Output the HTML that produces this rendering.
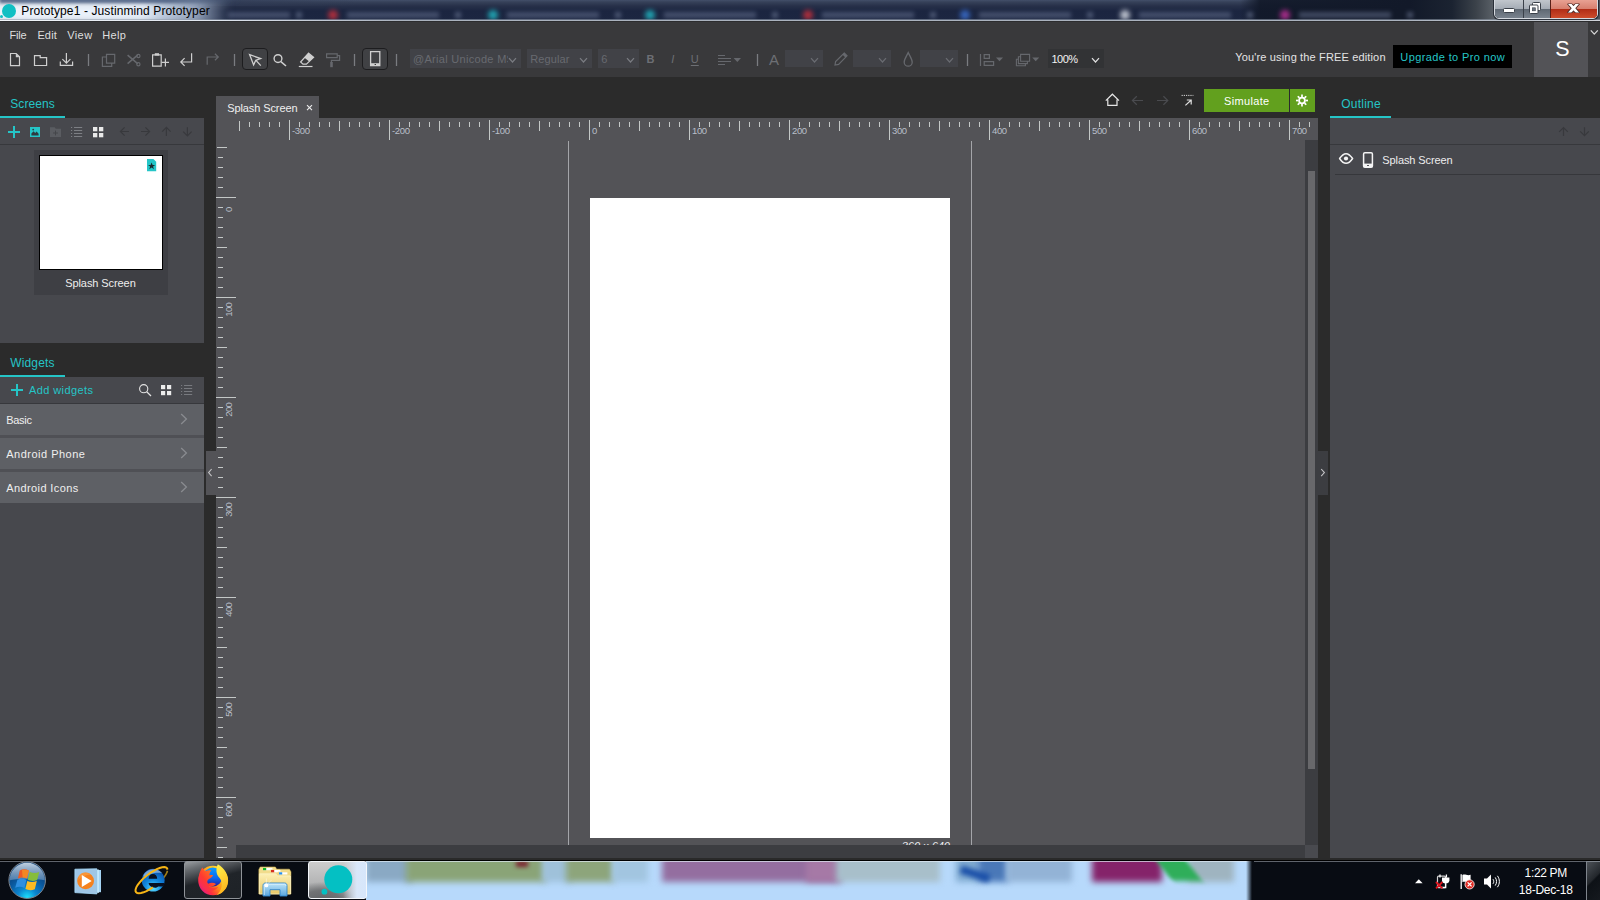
<!DOCTYPE html>
<html lang="en"><head><meta charset="utf-8"><title>Prototype1 - Justinmind Prototyper</title>
<style>
*{box-sizing:border-box;margin:0;padding:0}
html,body{width:1600px;height:900px;overflow:hidden;background:#2b2b2b;font-family:"Liberation Sans",sans-serif;font-size:11px;color:#e6e6e6}
.a{position:absolute}
svg{position:absolute;overflow:visible}
.t{position:absolute;white-space:nowrap;line-height:1}
#titlebar{left:0;top:0;width:1600px;height:21px;background:#141d30;overflow:hidden}
#appbar{left:0;top:21px;width:1600px;height:56px;background:#39393b}
#dark{left:0;top:77px;width:1600px;height:783px;background:#2b2b2b}
.panel{background:#47484d}
.combo{position:absolute;background:#414247}
.cat{position:absolute;left:0;width:204px;height:31px;background:#5e6065}
.tb{position:absolute;border:1px solid #1d1d1f;border-radius:4px;background:#404144}
#taskbar{left:0;top:860px;width:1600px;height:40px;background:#080c13;overflow:hidden}
</style></head><body>
<div id="titlebar" class="a">
<div class="a" style="left:0;top:0;width:1600px;height:21px;background:linear-gradient(#434f6a 0,#364159 2px,#273049 6px,#1b2540 11px,#1c2641 21px)"></div>
<div class="a" style="left:200px;top:0;width:160px;height:6px;background:linear-gradient(90deg,#2f3a54,rgba(47,58,84,0));opacity:.8"></div>
<div class="a" style="left:1220px;top:0;width:380px;height:21px;background:linear-gradient(90deg,rgba(17,24,40,0) 20px,rgba(17,24,40,.9) 40px,#121929 190px,#1b2331 232px,#3b424a 256px,#5b6168 274px,#4d535b 380px)"></div>
<div class="a" style="left:328px;top:10px;width:10px;height:10px;border-radius:50%;background:#c8303c;filter:blur(2.5px);opacity:.85"></div>
<div class="a" style="left:347px;top:12px;width:92px;height:6px;background:#6c7896;filter:blur(2px);opacity:.5"></div>
<div class="a" style="left:455px;top:12px;width:6px;height:6px;background:#7a86a4;filter:blur(2px);opacity:.5"></div>
<div class="a" style="left:488px;top:10px;width:10px;height:10px;border-radius:50%;background:#22b8c4;filter:blur(2.5px);opacity:.85"></div>
<div class="a" style="left:507px;top:12px;width:92px;height:6px;background:#6c7896;filter:blur(2px);opacity:.5"></div>
<div class="a" style="left:615px;top:12px;width:6px;height:6px;background:#7a86a4;filter:blur(2px);opacity:.5"></div>
<div class="a" style="left:645px;top:10px;width:10px;height:10px;border-radius:50%;background:#22b8c4;filter:blur(2.5px);opacity:.85"></div>
<div class="a" style="left:664px;top:12px;width:92px;height:6px;background:#6c7896;filter:blur(2px);opacity:.5"></div>
<div class="a" style="left:772px;top:12px;width:6px;height:6px;background:#7a86a4;filter:blur(2px);opacity:.5"></div>
<div class="a" style="left:803px;top:10px;width:10px;height:10px;border-radius:50%;background:#c8303c;filter:blur(2.5px);opacity:.85"></div>
<div class="a" style="left:822px;top:12px;width:92px;height:6px;background:#6c7896;filter:blur(2px);opacity:.5"></div>
<div class="a" style="left:930px;top:12px;width:6px;height:6px;background:#7a86a4;filter:blur(2px);opacity:.5"></div>
<div class="a" style="left:960px;top:10px;width:10px;height:10px;border-radius:50%;background:#3b6fd0;filter:blur(2.5px);opacity:.85"></div>
<div class="a" style="left:979px;top:12px;width:92px;height:6px;background:#6c7896;filter:blur(2px);opacity:.5"></div>
<div class="a" style="left:1087px;top:12px;width:6px;height:6px;background:#7a86a4;filter:blur(2px);opacity:.5"></div>
<div class="a" style="left:1120px;top:10px;width:10px;height:10px;border-radius:50%;background:#d8dde6;filter:blur(2.5px);opacity:.85"></div>
<div class="a" style="left:1139px;top:12px;width:92px;height:6px;background:#6c7896;filter:blur(2px);opacity:.5"></div>
<div class="a" style="left:1247px;top:12px;width:6px;height:6px;background:#7a86a4;filter:blur(2px);opacity:.5"></div>
<div class="a" style="left:1280px;top:10px;width:10px;height:10px;border-radius:50%;background:#c0309a;filter:blur(2.5px);opacity:.85"></div>
<div class="a" style="left:1299px;top:12px;width:92px;height:6px;background:#6c7896;filter:blur(2px);opacity:.5"></div>
<div class="a" style="left:1407px;top:12px;width:6px;height:6px;background:#7a86a4;filter:blur(2px);opacity:.5"></div>
<div class="a" style="left:228px;top:12px;width:62px;height:6px;background:#6c7896;filter:blur(2px);opacity:.5"></div>
<div class="a" style="left:296px;top:12px;width:6px;height:6px;background:#7a86a4;filter:blur(2px);opacity:.5"></div>
<div class="a" style="left:-30px;top:-1px;width:270px;height:26px;filter:blur(4px);background:linear-gradient(90deg,#eef4fb 0,#e6eef8 64%,rgba(205,218,236,.92) 71%,rgba(175,192,216,.8) 84%,rgba(150,170,200,0) 96%)"></div>
<div class="a" style="left:0;top:-2px;width:240px;height:5px;filter:blur(1.5px);background:linear-gradient(90deg,rgba(75,95,130,.85) 0,rgba(75,95,130,.85) 70%,rgba(75,95,130,0))"></div>
<div class="a" style="left:0;top:19px;width:1600px;height:1px;background:rgba(150,160,175,.55)"></div>
<div class="a" style="left:0;top:20px;width:1600px;height:1px;background:linear-gradient(90deg,#f2f6fa 0,#dfe5ee 220px,#aab2be 400px,#aab2be 1400px,#d0d4da 1600px)"></div>
<div class="a" style="left:1.6px;top:3.8px;width:14px;height:14px;border-radius:50%;background:#10bfc3"></div>
<div class="a" style="left:0.2px;top:15px;width:3px;height:3px;border-radius:50%;background:#10bfc3"></div>
<div class="t" style="left:21.3px;top:4.6px;font-size:12px;color:#000;letter-spacing:0.11px;">Prototype1 - Justinmind Prototyper</div>
<div class="a" style="left:1494px;top:-2px;width:104px;height:21px;border:1px solid #d5d9df;border-radius:0 0 5px 5px;box-shadow:0 0 0 1px rgba(20,25,35,.7);overflow:hidden;background:#222">
<div class="a" style="left:0;top:0;width:28px;height:20px;background:linear-gradient(#c4c9cf 0,#a5acb5 49%,#5e6772 50%,#7d8691 100%)"></div>
<div class="a" style="left:28px;top:0;width:1px;height:20px;background:#3a4049"></div>
<div class="a" style="left:29px;top:0;width:26px;height:20px;background:linear-gradient(#c4c9cf 0,#a5acb5 49%,#5e6772 50%,#7d8691 100%)"></div>
<div class="a" style="left:55px;top:0;width:1px;height:20px;background:#5a2018"></div>
<div class="a" style="left:56px;top:0;width:47px;height:20px;background:linear-gradient(#eaa597 0,#d77f6e 49%,#b02c16 50%,#d0502f 100%)"></div>
</div>
<svg width="110" height="20" style="left:1490px;top:0" viewBox="0 0 110 20">
<rect x="13.5" y="8.5" width="11" height="4" rx="1" fill="#fff" stroke="#3a4049" stroke-width="1"/>
<rect x="42.5" y="2.5" width="8" height="8" rx="1" fill="#fff" stroke="#3a4049" stroke-width="1"/>
<rect x="39.5" y="5" width="8.5" height="8.5" rx="1" fill="#fff" stroke="#3a4049" stroke-width="1"/>
<rect x="42.3" y="7.8" width="3" height="3" fill="#6a7480" stroke="#3a4049" stroke-width=".6"/>
<clipPath id="xc1"><rect x="76" y="3.4" width="16" height="9.6"/></clipPath><clipPath id="xc2"><rect x="76" y="4" width="16" height="8.4"/></clipPath>
<path d="M78.6 2.6L88.4 13.8M88.4 2.6L78.6 13.8" stroke="#4a2a28" stroke-width="4.4" fill="none" clip-path="url(#xc1)"/><path d="M78.6 2.6L88.4 13.8M88.4 2.6L78.6 13.8" stroke="#fff" stroke-width="2.7" fill="none" clip-path="url(#xc2)"/>
</svg>
</div>
<div id="appbar" class="a"></div>
<div class="a" style="left:0;top:21px;width:1600px;height:1px;background:#2c2c2e"></div>
<div class="t" style="left:9.5px;top:29.6px;font-size:11px;color:#dedede;letter-spacing:-0.17px;">File</div>
<div class="t" style="left:37.4px;top:29.6px;font-size:11px;color:#dedede;letter-spacing:0.14px;">Edit</div>
<div class="t" style="left:67.2px;top:29.6px;font-size:11px;color:#dedede;letter-spacing:0.42px;">View</div>
<div class="t" style="left:102.2px;top:29.6px;font-size:11px;color:#dedede;letter-spacing:0.39px;">Help</div>
<div class="tb" style="left:242px;top:48px;width:26px;height:22px"></div>
<div class="tb" style="left:362px;top:48px;width:26px;height:22px"></div>
<div class="combo" style="left:410px;top:49px;width:111px;height:19px"></div>
<div class="combo" style="left:527px;top:49px;width:65px;height:19px"></div>
<div class="combo" style="left:598px;top:49px;width:41px;height:19px"></div>
<div class="combo" style="left:785px;top:50px;width:38px;height:17px"></div>
<div class="combo" style="left:853px;top:50px;width:38px;height:17px"></div>
<div class="combo" style="left:920px;top:50px;width:38px;height:17px"></div>
<div class="combo" style="left:1048px;top:49px;width:56px;height:19px;background:#323335"></div>
<div class="a" style="left:412px;top:49px;width:95.5px;height:19px;overflow:hidden"><div class="t" style="left:1.0px;top:4.8px;font-size:11px;color:#686a70;letter-spacing:0.3px;">@Arial Unicode MS</div>
</div>
<div class="t" style="left:530.3px;top:53.8px;font-size:11px;color:#686a70;letter-spacing:0.08px;">Regular</div>
<div class="t" style="left:601.2px;top:53.8px;font-size:11px;color:#686a70;">6</div>
<div class="t" style="left:646.6px;top:53.9px;font-size:11px;color:#6d6f74;font-weight:bold;">B</div>
<div class="t" style="left:671.2px;top:53.9px;font-size:11px;color:#6d6f74;font-style:italic;">I</div>
<div class="t" style="left:690.8px;top:53.9px;font-size:11px;color:#6d6f74;text-decoration:underline;text-underline-offset:2px">U</div>
<div class="t" style="left:769.0px;top:52.3px;font-size:15px;color:#6d6f74;">A</div>
<div class="t" style="left:1051.5px;top:53.5px;font-size:11px;color:#f2f2f2;letter-spacing:-0.55px;">100%</div>
<svg width="1600" height="900" style="left:0;top:0" fill="none" stroke-width="1.2" stroke-linecap="butt">
<path d="M88.5 54V66" stroke="#7a7c80" stroke-width="1.3"/>
<path d="M234.5 54V66" stroke="#7a7c80" stroke-width="1.3"/>
<path d="M354.5 54V66" stroke="#7a7c80" stroke-width="1.3"/>
<path d="M396.5 54V66" stroke="#7a7c80" stroke-width="1.3"/>
<path d="M757.5 54V66" stroke="#7a7c80" stroke-width="1.3"/>
<path d="M967.5 54V66" stroke="#7a7c80" stroke-width="1.3"/>
<path d="M10.5 53.5H16.2L19.5 56.8V65.6H10.5Z" stroke="#cfcfcf"/><path d="M15.8 53.3V57.2H19.7Z" fill="#cfcfcf" stroke="none"/>
<path d="M34.5 65.5V55.6H40.2V57.6H46.6V65.5Z" stroke="#cfcfcf"/>
<path d="M66.4 53V63M62.4 59.2L66.4 63.2L70.4 59.2M60.3 61.5V65.3H72.6V61.5" stroke="#cfcfcf"/>
<path d="M106.5 54.3H114.7V63.2H106.5Z M106.5 57H102.4V66.3H111.7V63.2" stroke="#66686d"/>
<path d="M127.6 55.2L137.6 63.6M127.6 63.6L137.6 55.2" stroke="#66686d" stroke-width="1.6"/><circle cx="138.4" cy="56" r="1.6" stroke="#66686d"/><circle cx="138.4" cy="64.3" r="1.6" stroke="#66686d"/>
<path d="M152.6 54.8H161.2V66.2H152.6Z" stroke="#cfcfcf"/><path d="M154.8 53.2H159V55.6H154.8Z" fill="#cfcfcf" stroke="none"/><path d="M161.6 62.3H169M165.4 58.4V66.4" stroke="#cfcfcf"/>
<path d="M191.6 53.3V62H181M184.6 58.2L180.8 62L184.6 65.8" stroke="#cfcfcf" stroke-width="1.2"/>
<path d="M207.2 64.8V57H218M214.9 53.7L218.3 57L214.9 60.3" stroke="#66686d"/>
<path d="M249.6 54.6L260.6 58.6L255.8 60.3L253.6 64.9Z M256.2 60.6L260.8 65.6" stroke="#cfcfcf" stroke-width="1.3" stroke-linejoin="miter"/>
<circle cx="278" cy="58.6" r="3.9" stroke="#cfcfcf" stroke-width="1.4"/><path d="M280.9 61.6L286 66" stroke="#cfcfcf" stroke-width="1.5"/>
<path d="M308.6 53.2L313.6 57.4L306.4 64.2H303L300.6 62Z" stroke="#cfcfcf"/><path d="M308.6 53.2L313.6 57.4L309.2 61.6L304.2 57.4Z" fill="#cfcfcf" stroke="none"/><path d="M298.8 66.5H312.5" stroke="#cfcfcf"/>
<path d="M326.6 53.8H337.2V57.6H326.6Z M337.2 55.6H339.6V60.4H331.4V62" stroke="#66686d"/><path d="M330.2 62H332.8V67.2H330.2Z" fill="#66686d" stroke="none"/>
<path d="M370.6 51.6H379.8V65.6H370.6Z" stroke="#cfcfcf" stroke-width="1.3"/><path d="M370.6 63.2H379.8V65.6H370.6Z" fill="#cfcfcf" stroke="none"/><rect x="374.6" y="64" width="1.4" height="1" fill="#39393b" stroke="none"/>
<path d="M509 58.2L512.5 62.0L516 58.2" stroke="#7a7c82" stroke-width="1.2"/>
<path d="M580 58.2L583.5 62.0L587 58.2" stroke="#7a7c82" stroke-width="1.2"/>
<path d="M627 58.2L630.5 62.0L634 58.2" stroke="#7a7c82" stroke-width="1.2"/>
<path d="M811 58.2L814.5 62.0L818 58.2" stroke="#6a6c72" stroke-width="1.2"/>
<path d="M879 58.2L882.5 62.0L886 58.2" stroke="#6a6c72" stroke-width="1.2"/>
<path d="M946 58.2L949.5 62.0L953 58.2" stroke="#6a6c72" stroke-width="1.2"/>
<path d="M1092 58.2L1095.5 62.0L1099 58.2" stroke="#e0e0e0" stroke-width="1.2"/>
<path d="M718 55.5H725M718 58.5H731M718 61.5H731M718 64.5H725" stroke="#66686d" stroke-width="1"/><path d="M733.6 58L741 58L737.3 62Z" fill="#66686d" stroke="none"/>
<path d="M844.2 53L847 55.8L838.6 64.4L835 65L835.6 61.6Z" stroke="#66686d"/><path d="M842.4 54.6L844.2 53L847 55.8L845.4 57.6Z" fill="#66686d" stroke="none"/>
<path d="M908.2 52.6C906.4 56.4 904.2 59.4 904.2 62.2A4 4 0 0 0 912.2 62.2C912.2 59.4 910 56.4 908.2 52.6Z" stroke="#66686d" stroke-width="1.3"/>
<path d="M980.5 54V66" stroke="#66686d" stroke-width="1.2"/><path d="M984.2 54.6H989.4V58.4H984.2Z M984.2 61.6H993.6V65.4H984.2Z" stroke="#66686d"/><path d="M996 57.4H1003L999.5 61.2Z" fill="#66686d" stroke="none"/>
<path d="M1020.6 54.4H1029.6V61.2H1020.6Z M1020.6 56.8H1018.4V63.6H1027.4V61.4 M1018.4 59.2H1016.4V65.8H1025.4V63.6" stroke="#66686d" stroke-width="1.1"/><path d="M1032.2 57.4H1039.2L1035.7 61.2Z" fill="#66686d" stroke="none"/>
<path d="M1590.8 30.4L1594.3 34.199999999999996L1597.8 30.4" stroke="#d8d8d8" stroke-width="1.2"/>
</svg>
<div class="t" style="left:1235.3px;top:51.7px;font-size:11px;color:#e4e4e4;letter-spacing:0.15px;">You're using the FREE edition</div>
<div class="a" style="left:1393px;top:45px;width:119px;height:23px;background:#000"></div>
<div class="t" style="left:1400.3px;top:51.7px;font-size:11px;color:#25c5c7;letter-spacing:0.39px;">Upgrade to Pro now</div>
<div class="a" style="left:1534px;top:22px;width:54px;height:55px;background:#535357"></div>
<div class="t" style="left:1555.3px;top:38.8px;font-size:21.5px;color:#fff;">S</div>
<div id="dark" class="a"></div>
<div class="t" style="left:10.2px;top:97.8px;font-size:12px;color:#25c5c7;letter-spacing:0.1px;">Screens</div>
<div class="a" style="left:0;top:116px;width:65px;height:2px;background:#25c5c7"></div>
<div class="a panel" style="left:0;top:118px;width:204px;height:225px"></div>
<div class="a" style="left:0;top:144px;width:204px;height:1px;background:#37383c"></div>
<div class="a" style="left:34px;top:150px;width:134px;height:145px;background:#3e3f44"></div>
<div class="a" style="left:39px;top:155px;width:124px;height:115px;background:#fff;border:1px solid #000"></div>
<div class="t" style="left:65.2px;top:277.9px;font-size:11px;color:#ededed;letter-spacing:-0.08px;">Splash Screen</div>
<div class="t" style="left:10.2px;top:356.8px;font-size:12px;color:#25c5c7;letter-spacing:0.16px;">Widgets</div>
<div class="a" style="left:0;top:375px;width:65px;height:2px;background:#25c5c7"></div>
<div class="a panel" style="left:0;top:377px;width:204px;height:481px"></div>
<div class="a" style="left:0;top:403px;width:204px;height:1px;background:#37383c"></div>
<div class="t" style="left:29.0px;top:384.5px;font-size:11px;color:#25c5c7;letter-spacing:0.4px;">Add widgets</div>
<div class="a" style="left:0;top:404px;width:204px;height:99px;background:#4f5055"></div>
<div class="cat" style="top:404px"></div>
<div class="t" style="left:6.2px;top:414.5px;font-size:11px;color:#efefef;letter-spacing:-0.28px;">Basic</div>
<div class="cat" style="top:438px"></div>
<div class="t" style="left:6.2px;top:448.5px;font-size:11px;color:#efefef;letter-spacing:0.5px;">Android Phone</div>
<div class="cat" style="top:472px"></div>
<div class="t" style="left:6.2px;top:482.5px;font-size:11px;color:#efefef;letter-spacing:0.4px;">Android Icons</div>
<div class="a" style="left:206px;top:451px;width:10px;height:44px;background:#535357"></div>
<svg width="1600" height="900" style="left:0;top:0" fill="none" stroke-width="1.2">
<path d="M14 126V138M8 132H20" stroke="#25c5c7" stroke-width="2"/>
<rect x="30" y="127" width="10" height="10" fill="#25c5c7"/><path d="M31.4 135.6V133.6L33.6 131.2L35.2 133L36.6 131.6L38.6 133.8V135.6Z" fill="#2d3a40"/><circle cx="33.2" cy="129.6" r="0.9" fill="#2d3a40"/>
<path d="M50 127.2H54.6L55.8 128.8H61V137H50Z" fill="#5a5c61"/><path d="M55.5 130.6V135.4M53.1 133H57.9" stroke="#45464b" stroke-width="1"/>
<path d="M71 127.5H72.2M74 127.5H82.2" stroke="#7d7f84" stroke-width="1"/>
<path d="M71 130.5H72.2M74 130.5H82.2" stroke="#7d7f84" stroke-width="1"/>
<path d="M71 133.5H72.2M74 133.5H82.2" stroke="#7d7f84" stroke-width="1"/>
<path d="M71 136.5H72.2M74 136.5H82.2" stroke="#7d7f84" stroke-width="1"/>
<rect x="93" y="127" width="4.3" height="4.3" fill="#e9e9e9"/>
<rect x="99" y="127" width="4.3" height="4.3" fill="#e9e9e9"/>
<rect x="93" y="133" width="4.3" height="4.3" fill="#e9e9e9"/>
<rect x="99" y="133" width="4.3" height="4.3" fill="#e9e9e9"/>
<path d="M129 131.5H120.6M124.6 127.4L120.4 131.5L124.6 135.6" stroke="#38393d" stroke-width="1.2"/>
<path d="M141 131.5H149.4M145.4 127.4L149.6 131.5L145.4 135.6" stroke="#38393d" stroke-width="1.2"/>
<path d="M166.4 136V127.6M162.2 131.6L166.4 127.4L170.6 131.6" stroke="#38393d" stroke-width="1.2"/>
<path d="M187.4 127.2V135.6M183.2 131.6L187.4 135.8L191.6 131.6" stroke="#38393d" stroke-width="1.2"/>
<path d="M147 159H153.4L156.2 161.8V171.2H147Z" fill="#25c5c7"/><path d="M151.6 162.4L152.6 165H155.2L153.1 166.6L153.9 169.2L151.6 167.6L149.3 169.2L150.1 166.6L148 165H150.6Z" fill="#1c2a2e"/>
<path d="M17 384V396M11 390H23" stroke="#25c5c7" stroke-width="2"/>
<circle cx="143.7" cy="388.7" r="4.1" stroke="#e4e4e4" stroke-width="1.1"/><path d="M146.7 391.8L151 396" stroke="#e4e4e4" stroke-width="1.2"/>
<rect x="161" y="385" width="4.2" height="4.2" fill="#ececec"/>
<rect x="167" y="385" width="4.2" height="4.2" fill="#ececec"/>
<rect x="161" y="391" width="4.2" height="4.2" fill="#ececec"/>
<rect x="167" y="391" width="4.2" height="4.2" fill="#ececec"/>
<path d="M181 385.5H182.2M184 385.5H192.2" stroke="#787a7f" stroke-width="1"/>
<path d="M181 388.5H182.2M184 388.5H192.2" stroke="#787a7f" stroke-width="1"/>
<path d="M181 391.5H182.2M184 391.5H192.2" stroke="#787a7f" stroke-width="1"/>
<path d="M181 394.5H182.2M184 394.5H192.2" stroke="#787a7f" stroke-width="1"/>
<path d="M181.2 414L186.4 419L181.2 424" stroke="#898b90" stroke-width="1.3"/>
<path d="M181.2 448L186.4 453L181.2 458" stroke="#898b90" stroke-width="1.3"/>
<path d="M181.2 482L186.4 487L181.2 492" stroke="#898b90" stroke-width="1.3"/>
<path d="M211.6 469L208.6 472.6L211.6 476.2" stroke="#c4c4c6" stroke-width="1.1"/>
</svg>
<div class="a" style="left:216px;top:96px;width:103px;height:22px;background:#535357"></div>
<div class="t" style="left:227.2px;top:102.8px;font-size:11px;color:#efefef;letter-spacing:-0.1px;">Splash Screen</div>
<div class="a" style="left:216px;top:118px;width:1102px;height:740px;background:#535357;overflow:hidden" id="canvas">
<svg width="1102" height="740" style="left:0;top:0" shape-rendering="crispEdges">
<rect x="23" y="3" width="1" height="10" fill="#c4c8c7"/>
<rect x="33" y="4" width="1" height="5" fill="#c4c8c7"/>
<rect x="43" y="4" width="1" height="5" fill="#c4c8c7"/>
<rect x="53" y="4" width="1" height="5" fill="#c4c8c7"/>
<rect x="63" y="4" width="1" height="5" fill="#c4c8c7"/>
<rect x="73" y="2" width="1" height="20" fill="#c4c8c7"/>
<rect x="83" y="4" width="1" height="5" fill="#c4c8c7"/>
<rect x="93" y="4" width="1" height="5" fill="#c4c8c7"/>
<rect x="103" y="4" width="1" height="5" fill="#c4c8c7"/>
<rect x="113" y="4" width="1" height="5" fill="#c4c8c7"/>
<rect x="123" y="3" width="1" height="10" fill="#c4c8c7"/>
<rect x="133" y="4" width="1" height="5" fill="#c4c8c7"/>
<rect x="143" y="4" width="1" height="5" fill="#c4c8c7"/>
<rect x="153" y="4" width="1" height="5" fill="#c4c8c7"/>
<rect x="163" y="4" width="1" height="5" fill="#c4c8c7"/>
<rect x="173" y="2" width="1" height="20" fill="#c4c8c7"/>
<rect x="183" y="4" width="1" height="5" fill="#c4c8c7"/>
<rect x="193" y="4" width="1" height="5" fill="#c4c8c7"/>
<rect x="203" y="4" width="1" height="5" fill="#c4c8c7"/>
<rect x="213" y="4" width="1" height="5" fill="#c4c8c7"/>
<rect x="223" y="3" width="1" height="10" fill="#c4c8c7"/>
<rect x="233" y="4" width="1" height="5" fill="#c4c8c7"/>
<rect x="243" y="4" width="1" height="5" fill="#c4c8c7"/>
<rect x="253" y="4" width="1" height="5" fill="#c4c8c7"/>
<rect x="263" y="4" width="1" height="5" fill="#c4c8c7"/>
<rect x="273" y="2" width="1" height="20" fill="#c4c8c7"/>
<rect x="283" y="4" width="1" height="5" fill="#c4c8c7"/>
<rect x="293" y="4" width="1" height="5" fill="#c4c8c7"/>
<rect x="303" y="4" width="1" height="5" fill="#c4c8c7"/>
<rect x="313" y="4" width="1" height="5" fill="#c4c8c7"/>
<rect x="323" y="3" width="1" height="10" fill="#c4c8c7"/>
<rect x="333" y="4" width="1" height="5" fill="#c4c8c7"/>
<rect x="343" y="4" width="1" height="5" fill="#c4c8c7"/>
<rect x="353" y="4" width="1" height="5" fill="#c4c8c7"/>
<rect x="363" y="4" width="1" height="5" fill="#c4c8c7"/>
<rect x="373" y="2" width="1" height="20" fill="#c4c8c7"/>
<rect x="383" y="4" width="1" height="5" fill="#c4c8c7"/>
<rect x="393" y="4" width="1" height="5" fill="#c4c8c7"/>
<rect x="403" y="4" width="1" height="5" fill="#c4c8c7"/>
<rect x="413" y="4" width="1" height="5" fill="#c4c8c7"/>
<rect x="423" y="3" width="1" height="10" fill="#c4c8c7"/>
<rect x="433" y="4" width="1" height="5" fill="#c4c8c7"/>
<rect x="443" y="4" width="1" height="5" fill="#c4c8c7"/>
<rect x="453" y="4" width="1" height="5" fill="#c4c8c7"/>
<rect x="463" y="4" width="1" height="5" fill="#c4c8c7"/>
<rect x="473" y="2" width="1" height="20" fill="#c4c8c7"/>
<rect x="483" y="4" width="1" height="5" fill="#c4c8c7"/>
<rect x="493" y="4" width="1" height="5" fill="#c4c8c7"/>
<rect x="503" y="4" width="1" height="5" fill="#c4c8c7"/>
<rect x="513" y="4" width="1" height="5" fill="#c4c8c7"/>
<rect x="523" y="3" width="1" height="10" fill="#c4c8c7"/>
<rect x="533" y="4" width="1" height="5" fill="#c4c8c7"/>
<rect x="543" y="4" width="1" height="5" fill="#c4c8c7"/>
<rect x="553" y="4" width="1" height="5" fill="#c4c8c7"/>
<rect x="563" y="4" width="1" height="5" fill="#c4c8c7"/>
<rect x="573" y="2" width="1" height="20" fill="#c4c8c7"/>
<rect x="583" y="4" width="1" height="5" fill="#c4c8c7"/>
<rect x="593" y="4" width="1" height="5" fill="#c4c8c7"/>
<rect x="603" y="4" width="1" height="5" fill="#c4c8c7"/>
<rect x="613" y="4" width="1" height="5" fill="#c4c8c7"/>
<rect x="623" y="3" width="1" height="10" fill="#c4c8c7"/>
<rect x="633" y="4" width="1" height="5" fill="#c4c8c7"/>
<rect x="643" y="4" width="1" height="5" fill="#c4c8c7"/>
<rect x="653" y="4" width="1" height="5" fill="#c4c8c7"/>
<rect x="663" y="4" width="1" height="5" fill="#c4c8c7"/>
<rect x="673" y="2" width="1" height="20" fill="#c4c8c7"/>
<rect x="683" y="4" width="1" height="5" fill="#c4c8c7"/>
<rect x="693" y="4" width="1" height="5" fill="#c4c8c7"/>
<rect x="703" y="4" width="1" height="5" fill="#c4c8c7"/>
<rect x="713" y="4" width="1" height="5" fill="#c4c8c7"/>
<rect x="723" y="3" width="1" height="10" fill="#c4c8c7"/>
<rect x="733" y="4" width="1" height="5" fill="#c4c8c7"/>
<rect x="743" y="4" width="1" height="5" fill="#c4c8c7"/>
<rect x="753" y="4" width="1" height="5" fill="#c4c8c7"/>
<rect x="763" y="4" width="1" height="5" fill="#c4c8c7"/>
<rect x="773" y="2" width="1" height="20" fill="#c4c8c7"/>
<rect x="783" y="4" width="1" height="5" fill="#c4c8c7"/>
<rect x="793" y="4" width="1" height="5" fill="#c4c8c7"/>
<rect x="803" y="4" width="1" height="5" fill="#c4c8c7"/>
<rect x="813" y="4" width="1" height="5" fill="#c4c8c7"/>
<rect x="823" y="3" width="1" height="10" fill="#c4c8c7"/>
<rect x="833" y="4" width="1" height="5" fill="#c4c8c7"/>
<rect x="843" y="4" width="1" height="5" fill="#c4c8c7"/>
<rect x="853" y="4" width="1" height="5" fill="#c4c8c7"/>
<rect x="863" y="4" width="1" height="5" fill="#c4c8c7"/>
<rect x="873" y="2" width="1" height="20" fill="#c4c8c7"/>
<rect x="883" y="4" width="1" height="5" fill="#c4c8c7"/>
<rect x="893" y="4" width="1" height="5" fill="#c4c8c7"/>
<rect x="903" y="4" width="1" height="5" fill="#c4c8c7"/>
<rect x="913" y="4" width="1" height="5" fill="#c4c8c7"/>
<rect x="923" y="3" width="1" height="10" fill="#c4c8c7"/>
<rect x="933" y="4" width="1" height="5" fill="#c4c8c7"/>
<rect x="943" y="4" width="1" height="5" fill="#c4c8c7"/>
<rect x="953" y="4" width="1" height="5" fill="#c4c8c7"/>
<rect x="963" y="4" width="1" height="5" fill="#c4c8c7"/>
<rect x="973" y="2" width="1" height="20" fill="#c4c8c7"/>
<rect x="983" y="4" width="1" height="5" fill="#c4c8c7"/>
<rect x="993" y="4" width="1" height="5" fill="#c4c8c7"/>
<rect x="1003" y="4" width="1" height="5" fill="#c4c8c7"/>
<rect x="1013" y="4" width="1" height="5" fill="#c4c8c7"/>
<rect x="1023" y="3" width="1" height="10" fill="#c4c8c7"/>
<rect x="1033" y="4" width="1" height="5" fill="#c4c8c7"/>
<rect x="1043" y="4" width="1" height="5" fill="#c4c8c7"/>
<rect x="1053" y="4" width="1" height="5" fill="#c4c8c7"/>
<rect x="1063" y="4" width="1" height="5" fill="#c4c8c7"/>
<rect x="1073" y="2" width="1" height="20" fill="#c4c8c7"/>
<rect x="1083" y="4" width="1" height="5" fill="#c4c8c7"/>
<rect x="1093" y="4" width="1" height="5" fill="#c4c8c7"/>
<rect x="1" y="29" width="10" height="1" fill="#c4c8c7"/>
<rect x="2" y="39" width="5" height="1" fill="#c4c8c7"/>
<rect x="2" y="49" width="5" height="1" fill="#c4c8c7"/>
<rect x="2" y="59" width="5" height="1" fill="#c4c8c7"/>
<rect x="2" y="69" width="5" height="1" fill="#c4c8c7"/>
<rect x="0" y="79" width="20" height="1" fill="#c4c8c7"/>
<rect x="2" y="89" width="5" height="1" fill="#c4c8c7"/>
<rect x="2" y="99" width="5" height="1" fill="#c4c8c7"/>
<rect x="2" y="109" width="5" height="1" fill="#c4c8c7"/>
<rect x="2" y="119" width="5" height="1" fill="#c4c8c7"/>
<rect x="1" y="129" width="10" height="1" fill="#c4c8c7"/>
<rect x="2" y="139" width="5" height="1" fill="#c4c8c7"/>
<rect x="2" y="149" width="5" height="1" fill="#c4c8c7"/>
<rect x="2" y="159" width="5" height="1" fill="#c4c8c7"/>
<rect x="2" y="169" width="5" height="1" fill="#c4c8c7"/>
<rect x="0" y="179" width="20" height="1" fill="#c4c8c7"/>
<rect x="2" y="189" width="5" height="1" fill="#c4c8c7"/>
<rect x="2" y="199" width="5" height="1" fill="#c4c8c7"/>
<rect x="2" y="209" width="5" height="1" fill="#c4c8c7"/>
<rect x="2" y="219" width="5" height="1" fill="#c4c8c7"/>
<rect x="1" y="229" width="10" height="1" fill="#c4c8c7"/>
<rect x="2" y="239" width="5" height="1" fill="#c4c8c7"/>
<rect x="2" y="249" width="5" height="1" fill="#c4c8c7"/>
<rect x="2" y="259" width="5" height="1" fill="#c4c8c7"/>
<rect x="2" y="269" width="5" height="1" fill="#c4c8c7"/>
<rect x="0" y="279" width="20" height="1" fill="#c4c8c7"/>
<rect x="2" y="289" width="5" height="1" fill="#c4c8c7"/>
<rect x="2" y="299" width="5" height="1" fill="#c4c8c7"/>
<rect x="2" y="309" width="5" height="1" fill="#c4c8c7"/>
<rect x="2" y="319" width="5" height="1" fill="#c4c8c7"/>
<rect x="1" y="329" width="10" height="1" fill="#c4c8c7"/>
<rect x="2" y="339" width="5" height="1" fill="#c4c8c7"/>
<rect x="2" y="349" width="5" height="1" fill="#c4c8c7"/>
<rect x="2" y="359" width="5" height="1" fill="#c4c8c7"/>
<rect x="2" y="369" width="5" height="1" fill="#c4c8c7"/>
<rect x="0" y="379" width="20" height="1" fill="#c4c8c7"/>
<rect x="2" y="389" width="5" height="1" fill="#c4c8c7"/>
<rect x="2" y="399" width="5" height="1" fill="#c4c8c7"/>
<rect x="2" y="409" width="5" height="1" fill="#c4c8c7"/>
<rect x="2" y="419" width="5" height="1" fill="#c4c8c7"/>
<rect x="1" y="429" width="10" height="1" fill="#c4c8c7"/>
<rect x="2" y="439" width="5" height="1" fill="#c4c8c7"/>
<rect x="2" y="449" width="5" height="1" fill="#c4c8c7"/>
<rect x="2" y="459" width="5" height="1" fill="#c4c8c7"/>
<rect x="2" y="469" width="5" height="1" fill="#c4c8c7"/>
<rect x="0" y="479" width="20" height="1" fill="#c4c8c7"/>
<rect x="2" y="489" width="5" height="1" fill="#c4c8c7"/>
<rect x="2" y="499" width="5" height="1" fill="#c4c8c7"/>
<rect x="2" y="509" width="5" height="1" fill="#c4c8c7"/>
<rect x="2" y="519" width="5" height="1" fill="#c4c8c7"/>
<rect x="1" y="529" width="10" height="1" fill="#c4c8c7"/>
<rect x="2" y="539" width="5" height="1" fill="#c4c8c7"/>
<rect x="2" y="549" width="5" height="1" fill="#c4c8c7"/>
<rect x="2" y="559" width="5" height="1" fill="#c4c8c7"/>
<rect x="2" y="569" width="5" height="1" fill="#c4c8c7"/>
<rect x="0" y="579" width="20" height="1" fill="#c4c8c7"/>
<rect x="2" y="589" width="5" height="1" fill="#c4c8c7"/>
<rect x="2" y="599" width="5" height="1" fill="#c4c8c7"/>
<rect x="2" y="609" width="5" height="1" fill="#c4c8c7"/>
<rect x="2" y="619" width="5" height="1" fill="#c4c8c7"/>
<rect x="1" y="629" width="10" height="1" fill="#c4c8c7"/>
<rect x="2" y="639" width="5" height="1" fill="#c4c8c7"/>
<rect x="2" y="649" width="5" height="1" fill="#c4c8c7"/>
<rect x="2" y="659" width="5" height="1" fill="#c4c8c7"/>
<rect x="2" y="669" width="5" height="1" fill="#c4c8c7"/>
<rect x="0" y="679" width="20" height="1" fill="#c4c8c7"/>
<rect x="2" y="689" width="5" height="1" fill="#c4c8c7"/>
<rect x="2" y="699" width="5" height="1" fill="#c4c8c7"/>
<rect x="2" y="709" width="5" height="1" fill="#c4c8c7"/>
<rect x="2" y="719" width="5" height="1" fill="#c4c8c7"/>
<rect x="1" y="729" width="10" height="1" fill="#c4c8c7"/>
<rect x="2" y="739" width="5" height="1" fill="#c4c8c7"/>
<rect x="352" y="23" width="1" height="704" fill="#a4a5a9"/>
<rect x="755" y="23" width="1" height="704" fill="#a4a5a9"/>
</svg>
<div class="t" style="left:76px;top:8.2px;font-size:9.5px;letter-spacing:-.35px;color:#b9bfc9">-300</div>
<div class="t" style="left:176px;top:8.2px;font-size:9.5px;letter-spacing:-.35px;color:#b9bfc9">-200</div>
<div class="t" style="left:276px;top:8.2px;font-size:9.5px;letter-spacing:-.35px;color:#b9bfc9">-100</div>
<div class="t" style="left:376px;top:8.2px;font-size:9.5px;letter-spacing:-.35px;color:#b9bfc9">0</div>
<div class="t" style="left:476px;top:8.2px;font-size:9.5px;letter-spacing:-.35px;color:#b9bfc9">100</div>
<div class="t" style="left:576px;top:8.2px;font-size:9.5px;letter-spacing:-.35px;color:#b9bfc9">200</div>
<div class="t" style="left:676px;top:8.2px;font-size:9.5px;letter-spacing:-.35px;color:#b9bfc9">300</div>
<div class="t" style="left:776px;top:8.2px;font-size:9.5px;letter-spacing:-.35px;color:#b9bfc9">400</div>
<div class="t" style="left:876px;top:8.2px;font-size:9.5px;letter-spacing:-.35px;color:#b9bfc9">500</div>
<div class="t" style="left:976px;top:8.2px;font-size:9.5px;letter-spacing:-.35px;color:#b9bfc9">600</div>
<div class="t" style="left:1076px;top:8.2px;font-size:9.5px;letter-spacing:-.35px;color:#b9bfc9">700</div>
<div class="t" style="left:-6.6px;width:40px;text-align:center;top:87.1px;font-size:9.5px;letter-spacing:-.6px;color:#b9bfc9;transform:rotate(-90deg)">0</div>
<div class="t" style="left:-6.6px;width:40px;text-align:center;top:187.1px;font-size:9.5px;letter-spacing:-.6px;color:#b9bfc9;transform:rotate(-90deg)">100</div>
<div class="t" style="left:-6.6px;width:40px;text-align:center;top:287.1px;font-size:9.5px;letter-spacing:-.6px;color:#b9bfc9;transform:rotate(-90deg)">200</div>
<div class="t" style="left:-6.6px;width:40px;text-align:center;top:387.1px;font-size:9.5px;letter-spacing:-.6px;color:#b9bfc9;transform:rotate(-90deg)">300</div>
<div class="t" style="left:-6.6px;width:40px;text-align:center;top:487.1px;font-size:9.5px;letter-spacing:-.6px;color:#b9bfc9;transform:rotate(-90deg)">400</div>
<div class="t" style="left:-6.6px;width:40px;text-align:center;top:587.1px;font-size:9.5px;letter-spacing:-.6px;color:#b9bfc9;transform:rotate(-90deg)">500</div>
<div class="t" style="left:-6.6px;width:40px;text-align:center;top:687.1px;font-size:9.5px;letter-spacing:-.6px;color:#b9bfc9;transform:rotate(-90deg)">600</div>
<div class="a" style="left:374px;top:80px;width:360px;height:640px;background:#fff"></div>
<div class="t" style="left:574px;width:160px;text-align:right;top:722.6px;font-size:11px;font-style:italic;color:#ececf0">360 x 640</div>
<div class="a" style="left:1089px;top:22px;width:13px;height:718px;background:#3c3d41"></div>
<div class="a" style="left:1092px;top:53px;width:7px;height:598px;background:#68686b"></div>
<div class="a" style="left:20px;top:727px;width:1082px;height:13px;background:#3c3d41"></div>
<div class="a" style="left:1089px;top:727px;width:13px;height:13px;background:#494a4f"></div>
</div>
<div class="a" style="left:1204px;top:89px;width:85px;height:23px;background:#62a01e"></div>
<div class="t" style="left:1224.0px;top:95.7px;font-size:11px;color:#fff;letter-spacing:0.34px;">Simulate</div>
<div class="a" style="left:1290px;top:89px;width:25px;height:23px;background:#62a01e"></div>
<div class="a" style="left:1318px;top:451px;width:10px;height:44px;background:#3c3d41"></div>
<svg width="1600" height="900" style="left:0;top:0" fill="none" stroke-width="1.2">
<path d="M307 105.2L312 110.2M312 105.2L307 110.2" stroke="#ededed" stroke-width="1.1"/>
<path d="M1105.8 100.6L1112.4 94.2L1119 100.6M1107.8 99.4V105.4H1117V99.4" stroke="#e6e6e6" stroke-width="1.2"/>
<path d="M1143 100.5H1132.6M1136.8 96.2L1132.4 100.5L1136.8 104.8" stroke="#4a4b4f" stroke-width="1.2"/>
<path d="M1157 100.5H1167.6M1163.4 96.2L1167.8 100.5L1163.4 104.8" stroke="#4a4b4f" stroke-width="1.2"/>
<path d="M1181.6 95.4H1193.4" stroke="#d8d8d8" stroke-width="1" stroke-dasharray="1.2 1"/>
<path d="M1185.4 105.4L1191 100.2M1186.8 100H1191.2V104.4" stroke="#e0e0e0" stroke-width="1.2"/>
<circle cx="1302.0" cy="100.5" r="2.9" stroke="#fff" stroke-width="1.8"/>
<path d="M1305.60 100.50L1308.00 100.50" stroke="#fff" stroke-width="1.7"/>
<path d="M1304.55 103.05L1306.24 104.74" stroke="#fff" stroke-width="1.7"/>
<path d="M1302.00 104.10L1302.00 106.50" stroke="#fff" stroke-width="1.7"/>
<path d="M1299.45 103.05L1297.76 104.74" stroke="#fff" stroke-width="1.7"/>
<path d="M1298.40 100.50L1296.00 100.50" stroke="#fff" stroke-width="1.7"/>
<path d="M1299.45 97.95L1297.76 96.26" stroke="#fff" stroke-width="1.7"/>
<path d="M1302.00 96.90L1302.00 94.50" stroke="#fff" stroke-width="1.7"/>
<path d="M1304.55 97.95L1306.24 96.26" stroke="#fff" stroke-width="1.7"/>
<path d="M1321.2 469L1324.4 472.6L1321.2 476.2" stroke="#c4c4c6" stroke-width="1.1"/>
</svg>
<div class="t" style="left:1341.2px;top:97.8px;font-size:12px;color:#25c5c7;letter-spacing:0.25px;">Outline</div>
<div class="a" style="left:1330px;top:116px;width:61px;height:2px;background:#25c5c7"></div>
<div class="a panel" style="left:1330px;top:118px;width:270px;height:740px"></div>
<div class="a" style="left:1330px;top:144px;width:270px;height:1px;background:#37383c"></div>
<div class="a" style="left:1335px;top:174px;width:265px;height:1px;background:#36373b"></div>
<div class="t" style="left:1382.3px;top:154.6px;font-size:11px;color:#ededed;letter-spacing:-0.1px;">Splash Screen</div>
<svg width="1600" height="900" style="left:0;top:0" fill="none" stroke-width="1.2">
<path d="M1563.5 136V127.6M1559.2 131.8L1563.5 127.5L1567.8 131.8" stroke="#38393d" stroke-width="1.2"/>
<path d="M1584.5 127.2V135.6M1580.2 131.4L1584.5 135.7L1588.8 131.4" stroke="#38393d" stroke-width="1.2"/>
<path d="M1339.6 158.5Q1346 148.8 1352.6 158.5Q1346 168.200 1339.6 158.5Z" stroke="#f4f4f4" stroke-width="1.5" stroke-linejoin="round"/><circle cx="1346" cy="158.5" r="2.1" fill="#f4f4f4"/>
<rect x="1363.6" y="152.7" width="8.8" height="14.5" rx="1.3" stroke="#f4f4f4" stroke-width="1.5"/><path d="M1363.6 163.6H1372.4V167.2H1363.6Z" fill="#f4f4f4"/><rect x="1367" y="165" width="2" height="1.1" rx=".4" fill="#47484d"/>
</svg>
<div id="taskbar" class="a" style="top:858px;height:42px">
<div class="a" style="left:0;top:0;width:1600px;height:2px;background:#2a2a2a"></div>
<div class="a" style="left:0;top:2px;width:1600px;height:1px;background:#000"></div>
<div class="a" style="left:0;top:3px;width:1600px;height:1px;background:#5f646c"></div>
<div class="a" style="left:366px;top:3px;width:886px;height:39px;background:#b7d9fb;overflow:hidden">
<div class="a" style="left:0px;top:-6px;width:46px;height:27px;background:#8aa9c4;filter:blur(3px)"></div>
<div class="a" style="left:40px;top:-6px;width:140px;height:27px;background:#8aa477;filter:blur(3px)"></div>
<div class="a" style="left:176px;top:-6px;width:30px;height:27px;background:#9fc1da;filter:blur(3px)"></div>
<div class="a" style="left:200px;top:-6px;width:48px;height:27px;background:#8da57b;filter:blur(3px)"></div>
<div class="a" style="left:246px;top:-6px;width:36px;height:27px;background:#a2c5e0;filter:blur(3px)"></div>
<div class="a" style="left:296px;top:-6px;width:180px;height:27px;background:#946ea0;filter:blur(3px)"></div>
<div class="a" style="left:440px;top:-6px;width:32px;height:27px;background:#a679a6;filter:blur(3px)"></div>
<div class="a" style="left:470px;top:-6px;width:104px;height:27px;background:#a8bfca;filter:blur(3px)"></div>
<div class="a" style="left:590px;top:-6px;width:24px;height:27px;background:#7faad0;filter:blur(3px)"></div>
<div class="a" style="left:612px;top:-6px;width:30px;height:27px;background:#4a78b8;filter:blur(3px)"></div>
<div class="a" style="left:640px;top:-6px;width:66px;height:27px;background:#93b3d6;filter:blur(3px)"></div>
<div class="a" style="left:726px;top:-6px;width:70px;height:27px;background:#85236a;filter:blur(3px)"></div>
<div class="a" style="left:822px;top:-6px;width:46px;height:27px;background:#9fb4c0;filter:blur(3px)"></div>
<div class="a" style="left:150px;top:0;width:12px;height:6px;background:#7c2430;filter:blur(2px)"></div>
<div class="a" style="left:796px;top:-6px;width:30px;height:26px;background:#2fae5a;filter:blur(2.5px);transform:skewX(38deg)"></div>
<div class="a" style="left:594px;top:9px;width:30px;height:8px;background:#1a4fa8;filter:blur(2.5px);transform:rotate(18deg)"></div>
<div class="a" style="left:0;top:0;width:886px;height:1px;background:rgba(225,235,245,.7)"></div>
</div>
<div class="a" style="left:1246px;top:3px;width:8px;height:39px;background:linear-gradient(90deg,rgba(8,12,19,0),#080c13 75%)"></div>
<div class="a" style="left:184px;top:3px;width:58px;height:38px;border:1px solid #8f9398;border-radius:3px;background:linear-gradient(165deg,#999da1 0,#6b6f73 16%,#3c4045 36%,#202429 48%,#1e2227 100%)"></div>
<div class="a" style="left:308px;top:3px;width:59px;height:38px;border:1px solid #f4f7fb;border-radius:3px;background:linear-gradient(90deg,rgba(220,233,250,0) 60%,#d9e7f9 84%,#d6e6fb 100%),radial-gradient(ellipse 34px 19px at 22% 108%,rgba(95,97,100,.95) 0,rgba(100,102,105,.8) 55%,rgba(120,122,125,0) 100%),linear-gradient(#cdcdcd,#a2a3a4)"></div>
<div class="a" style="left:1586px;top:3px;width:15px;height:40px;border:1px solid #7f858d;background:linear-gradient(135deg,#4c5157 0,#23272c 45%,#0d1116 50%,#15191e 100%)"></div>
<svg width="1600" height="42" style="left:0;top:0" viewBox="0 858 1600 42">
<defs>
<radialGradient id="orb" cx="50%" cy="70%" r="70%"><stop offset="0" stop-color="#4fd6ff"/><stop offset=".45" stop-color="#1c7fc4"/><stop offset="1" stop-color="#0b3a73"/></radialGradient>
<linearGradient id="orbhi" x1="0" y1="0" x2="0" y2="1"><stop offset="0" stop-color="#fff" stop-opacity=".75"/><stop offset="1" stop-color="#fff" stop-opacity=".05"/></linearGradient>
<linearGradient id="ff" x1="0" y1="0" x2="1" y2="1"><stop offset="0" stop-color="#ffdf3a"/><stop offset=".45" stop-color="#ff9a1c"/><stop offset="1" stop-color="#f2243f"/></linearGradient>
<radialGradient id="ffb" cx="50%" cy="35%" r="65%"><stop offset="0" stop-color="#1493ff"/><stop offset="1" stop-color="#2a2fb0"/></radialGradient>
<linearGradient id="fold" x1="0" y1="0" x2="0" y2="1"><stop offset="0" stop-color="#fdf0b4"/><stop offset="1" stop-color="#e9c867"/></linearGradient>
<linearGradient id="ie" x1="0" y1="0" x2="0" y2="1"><stop offset="0" stop-color="#6fd0ff"/><stop offset="1" stop-color="#0d5fc4"/></linearGradient>
</defs>
<defs><radialGradient id="orb2" cx="50%" cy="98%" r="75%"><stop offset="0" stop-color="#1be4ff"/><stop offset=".35" stop-color="#0b86cf"/><stop offset=".7" stop-color="#0a5aa0"/><stop offset="1" stop-color="#0a447e"/></radialGradient><linearGradient id="orbhi2" x1="0" y1="0" x2="0" y2="1"><stop offset="0" stop-color="#dfe8f2" stop-opacity=".85"/><stop offset="1" stop-color="#9db8d4" stop-opacity=".45"/></linearGradient><linearGradient id="ffbody" x1=".95" y1=".1" x2=".1" y2=".9"><stop offset="0" stop-color="#fff04a"/><stop offset=".3" stop-color="#ffc31e"/><stop offset=".55" stop-color="#ff8a18"/><stop offset=".8" stop-color="#ff2f3c"/><stop offset="1" stop-color="#e01a90"/></linearGradient><linearGradient id="ffglobe" x1="0" y1="0" x2="0" y2="1"><stop offset="0" stop-color="#0a9bff"/><stop offset=".55" stop-color="#0a6af0"/><stop offset="1" stop-color="#2c1c9a"/></linearGradient><linearGradient id="ffy" x1="0" y1="0" x2=".3" y2="1"><stop offset="0" stop-color="#fff44f"/><stop offset="1" stop-color="#ffb61e"/></linearGradient><linearGradient id="ffhead" x1="1" y1="0" x2="0" y2="1"><stop offset="0" stop-color="#ff9a18"/><stop offset=".6" stop-color="#ff3a30"/><stop offset="1" stop-color="#f0207a"/></linearGradient><radialGradient id="ie2" cx="50%" cy="85%" r="80%"><stop offset="0" stop-color="#5fe0ff"/><stop offset=".45" stop-color="#128ae0"/><stop offset="1" stop-color="#0a4ea8"/></radialGradient><linearGradient id="stand" x1="0" y1="0" x2="0" y2="1"><stop offset="0" stop-color="#bfe6fa"/><stop offset="1" stop-color="#5aa6dc"/></linearGradient></defs>
<circle cx="27.2" cy="880.1" r="18.3" fill="url(#orb2)" stroke="#7d838b" stroke-width="1"/>
<path d="M9.6 880.4A17.6 17.6 0 0 1 44.8 880.4C38 878.200 16 878.200 9.6 880.4Z" fill="url(#orbhi2)"/>
<path d="M19.8 870.4C22.8 868.9 25.9 869 28.9 870.5L27 878.5C24.200 877.200 21 877.200 17.9 878.6Z" fill="#ee5a24"/><path d="M22 870C24.5 869.5 26.8 869.8 28.9 870.5L27 878.5C25.5 877.9 24 877.5 22.600 877.5Z" fill="#f59a23" opacity=".7"/>
<path d="M29.7 871.7C32.7 873.3 35.9 873.3 39.200 871.9L37.200 880C34 881.4 30.8 881.200 27.8 879.8Z" fill="#86bd3a"/>
<path d="M17.4 879.7C20.400 878.3 23.600 878.4 26.400 879.8L24.400 887.9C21.600 886.5 18.400 886.4 15.200 887.8Z" fill="#2f8fe0"/>
<path d="M27.3 880.9C30.3 882.4 33.5 882.4 36.8 881L34.8 889.200C31.600 890.6 28.400 890.4 25.400 889Z" fill="#fdbb22"/>
<path d="M98.8 870H101V892.200H98.8Z" fill="#a4d4f4"/><path d="M96.9 869.6H99V892.800H96.9Z" fill="#c4e6fb"/>
<path d="M74.9 869.200L96.9 868.800V893.900L74.9 892.600Z" fill="#9fc6e6" stroke="#a8dcfb" stroke-width=".8"/>
<circle cx="85.6" cy="880.9" r="8.4" fill="#f5821f"/><path d="M78.5 876A8.4 8.4 0 0 1 91 874.600C86 875 81 877 78.500 880Z" fill="#fca34a" opacity=".6"/><path d="M81.8 874.900L91.7 881L81.8 887.100Z" fill="#fff"/>
<path d="M167.5 870.7L167.3 871.4L167.1 872.1L166.7 872.9L166.3 873.7L165.9 874.5L165.3 875.4L164.7 876.3L164.0 877.2L163.2 878.2L162.4 879.1L161.5 880.1L160.6 881.0L159.6 882.0L158.6 882.9L157.5 883.8L156.4 884.7L155.3 885.6L154.2 886.4L153.0 887.3L151.9 888.0L150.7 888.8L149.5 889.5L148.4 890.1L147.2 890.7" fill="none" stroke="#c89a18" stroke-width="1.6" opacity=".8"/>
<circle cx="153.200" cy="880.200" r="11.4" fill="url(#ie2)"/>
<path d="M143.500 875A11.4 11.4 0 0 1 162 873C157 872 149 873 143.500 878Z" fill="#cfe8fa" opacity=".55"/>
<path d="M148.600 878.700C148.800 875.800 150.600 873.900 153 873.900C155.400 873.900 157 875.800 157.200 878.700Z" fill="#071022"/>
<path d="M148.600 882.900H164.400C164.300 884.100 164 885.300 163.600 886.400H158.200C157 887.500 155.300 888 153.600 887.600C150.800 887 148.900 885.300 148.600 882.900Z" fill="#071022"/>
<path d="M152.8 887.4L149.6 889.4L146.5 891.1L143.6 892.3L141.0 893.0L138.9 893.3L137.2 893.0L136.0 892.2L135.5 891.0L135.6 889.4L136.3 887.3L137.6 885.1L139.5 882.6L141.8 880.0L144.5 877.4L147.5 875.0L150.6 872.7L153.8 870.8L156.8 869.2L159.7 868.0L162.2 867.3L164.4 867.1L166.0 867.5L167.1 868.3L167.5 869.6" fill="none" stroke="#f7b515" stroke-width="2"/>
<circle cx="213" cy="880.5" r="14.8" fill="url(#ffbody)"/>
<circle cx="212.800" cy="877" r="9.4" fill="url(#ffglobe)"/>
<path d="M202.300 867.400L205 871.200C207.200 870.200 209.600 870 211.400 870.400C210 871.800 209.300 873.600 209.400 875.400C210.600 874.900 212.200 874.900 213.200 875.500C212 877 210.200 878.500 208.600 879.300C207 880.600 206.800 882.500 208.200 883.800C210.400 882.600 213.600 882.500 216 883.900C214.400 886 211.200 886.900 208.400 885.800C210.400 888 214.400 888.600 218.400 886.800C215.800 891 209.400 892.600 204.600 889.600C199.600 886.200 197.600 879.600 199.400 873.600C200 871.400 201 869.200 202.300 867.400Z" fill="url(#ffhead)"/>
<path d="M217.800 864.200C224.400 868 229.800 875.600 227.700 884.200C226.200 889.800 221.600 893.800 216.400 895.200C221.800 890.800 223.800 883.400 219.600 878C215.800 874.200 215.800 868.800 217.800 864.200Z" fill="url(#ffy)"/>
<path d="M258.900 894V869.400L260.200 867H275.400L276.600 869.200H289.400L290.900 871.800V894Z" fill="#f2dc8c" stroke="#d6b85e" stroke-width=".6"/>
<rect x="263" y="867.900" width="9.400" height="2.300" fill="#fff"/><rect x="263" y="867.900" width="3.200" height="2.300" fill="#12b52a"/>
<path d="M269.400 872.400L270.600 869.600H279.800V872.400Z" fill="#f2dc8c"/><rect x="271" y="870" width="9.400" height="2.300" fill="#fff"/><rect x="271" y="870" width="3.200" height="2.300" fill="#d6301e"/>
<path d="M276.800 875L278 871.800H290.900V875Z" fill="#f0d880"/><rect x="279" y="872.300" width="8.400" height="2.200" fill="#fff"/><rect x="279" y="872.300" width="3.200" height="2.200" fill="#2490f0"/>
<path d="M259.400 894V873.800H275.800L277.400 875.900H290.500V894Z" fill="url(#fold)" stroke="#fbf3c8" stroke-width=".7"/>
<path d="M263 896V885.600C263 884 264 883 265.600 883H284.400C286 883 287 884 287 885.600V896H280V889.700H270V896Z" fill="url(#stand)" stroke="#2f86cc" stroke-width=".9"/>
<path d="M264.200 895V885.800C264.200 884.800 264.800 884.200 265.800 884.200H284.200C285.200 884.200 285.800 884.800 285.800 885.800" fill="none" stroke="#e4f6ff" stroke-width=".8" opacity=".9"/>
<circle cx="266.400" cy="885.400" r="1.900" fill="#fff"/><path d="M266.400 878.500V885M266.400 885.400L271.500 880" stroke="#fff" stroke-width=".5" opacity=".8"/>
<circle cx="338.300" cy="879.300" r="14" fill="#04c0c3"/><circle cx="324.400" cy="891.700" r="2.900" fill="#04c0c3"/>
<path d="M1415 883.200L1418.800 879.200L1422.600 883.200Z" fill="#fff"/>
<rect x="1437.500" y="876.200" width="8" height="11.500" rx="1" fill="none" stroke="#d0d0d0" stroke-width="1.200"/><path d="M1440 874.400V877.400M1446.400 874.400V877.400" stroke="#fff" stroke-width="1.300"/><path d="M1442 877.400H1449.400V880.600C1449.400 882.600 1447.600 883.600 1446 883.600H1445.400C1443.800 883.600 1442 882.600 1442 880.600Z" fill="#fff"/><path d="M1445.700 883.600V887.500H1441" stroke="#fff" stroke-width="1.300" fill="none"/><path d="M1436 882L1442.400 888.400M1442.400 882L1436 888.400" stroke="#e0141e" stroke-width="1.800"/>
<path d="M1461.200 874.200V889" stroke="#fff" stroke-width="1.300"/><path d="M1462.400 875C1465 873.600 1467 876 1470.600 874.800V882C1467 883.200 1465 880.800 1462.400 882.200Z" fill="#fff"/><circle cx="1469.600" cy="884.400" r="4.600" fill="#e02a22" stroke="#fff" stroke-width=".8"/><path d="M1467.600 882.400L1471.600 886.400M1471.600 882.400L1467.600 886.400" stroke="#fff" stroke-width="1.300"/>
<path d="M1484 878.400H1487L1491 874.400V888.600L1487 884.600H1484Z" fill="#fff"/><path d="M1493 879.200C1494 880.600 1494 882.400 1493 883.800M1495.200 877.400C1497 879.800 1497 883.200 1495.200 885.600M1497.400 875.800C1500 879.200 1500 883.800 1497.400 887.200" stroke="#fff" stroke-width="1" fill="none"/>
</svg>
<div class="t" style="left:1524.6px;top:8.8px;font-size:12px;color:#fff;letter-spacing:-0.35px;">1:22 PM</div>
<div class="t" style="left:1518.8px;top:25.5px;font-size:12px;color:#fff;letter-spacing:-0.25px;">18-Dec-18</div>
</div>
</body></html>
